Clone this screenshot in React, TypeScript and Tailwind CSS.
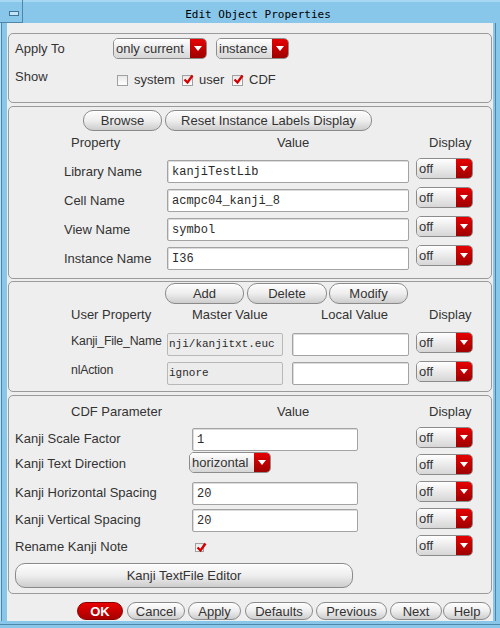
import React from 'react';

const Btn = ({ label, className = '' }: { label: string; className?: string }) => (
  <div
    className={`flex items-center justify-center rounded-[10px] border border-[#8a8a8a] bg-linear-to-b from-[#fdfdfd] via-[#eeeeee] to-[#cdcdcd] text-[13px] leading-none text-[#333] shadow-[inset_0_1px_0_#fff] ${className}`}
  >
    {label}
  </div>
);

const Drop = ({ label, className = '' }: { label: string; className?: string }) => (
  <div className={`flex h-[21px] overflow-hidden rounded-[5px] border border-[#8c8c8c] ${className}`}>
    <div className="flex flex-1 items-center bg-linear-to-b from-white to-[#d6d6d6] pl-[2px] text-[13px] leading-none text-[#333]">
      {label}
    </div>
    <div className="flex w-[16px] items-center justify-center bg-linear-to-b from-[#e60000] to-[#9e0000]">
      <svg width="8" height="5" viewBox="0 0 8 5">
        <polygon points="0,0 8,0 4,5" fill="#fff" />
      </svg>
    </div>
  </div>
);

const Field = ({ value = '', className = '', ro = false }: { value?: string; className?: string; ro?: boolean }) => (
  <div
    className={`flex items-center overflow-hidden whitespace-nowrap rounded-[2px] border font-['Liberation_Mono',monospace] leading-none text-[#2a2a2a] ${
      ro ? 'border-[#b8b8b8] bg-[#ececec]' : 'border-[#a3a3a3] bg-white pl-[4px] text-[12px] shadow-[inset_1px_1px_0_#dcdcdc]'
    } ${className}`}
  >
    {value}
  </div>
);

const Check = ({ on, size = 'w-[11px] h-[11px]' }: { on: boolean; size?: string }) => (
  <div className={`relative shrink-0 border border-[#a0a0a0] bg-linear-to-b from-[#e8e8e8] to-white ${size}`}>
    {on && (
      <svg className="absolute left-[0px] top-[-2px]" width="11" height="11" viewBox="0 0 11 11">
        <path d="M1.5 5.5 L4.5 8.5 L9.5 1.5" stroke="#d40000" strokeWidth="2.4" fill="none" />
      </svg>
    )}
  </div>
);

export default function App() {
  const props = [
    ['Library Name', 'kanjiTestLib'],
    ['Cell Name', 'acmpc04_kanji_8'],
    ['View Name', 'symbol'],
    ['Instance Name', 'I36'],
  ];

  return (
    <div className="flex h-[628px] w-[500px] flex-col bg-[#88c6ea] font-['Liberation_Sans',Arial,sans-serif] text-[13px] text-[#333]">
      {/* title bar */}
      <div className="flex h-[23px] shrink-0 shadow-[inset_0_2px_0_#a6d8f4]">
        <div className="w-[23px] border-r border-b border-[#4f87a8] pl-[9px] pt-[11px]">
          <div className="h-[5px] w-[10px] border border-[#3f7596] bg-[#c4e4f6]" />
        </div>
        <div className="flex flex-1 items-center justify-center pt-[6px] font-['DejaVu_Sans_Mono',monospace] text-[11px] leading-none text-black">
          Edit Object Properties
        </div>
        <div className="w-[7px]" />
      </div>

      <div className="flex flex-1">
        <div className="w-[7px] shadow-[inset_1px_0_0_#b7e1f8,inset_2px_0_0_#4f87a8]" />

        {/* content */}
        <div className="flex w-[486px] flex-col bg-[#eeeeee] pt-[10px]">
          {/* Apply to / Show */}
          <div className="mx-[1px] h-[70px] rounded-[5px] border border-[#9a9a9a]">
            <div className="mt-[4px] flex h-[21px] items-center">
              <span className="ml-[6px] w-[98px]">Apply To</span>
              <Drop className="w-[94px]" label="only current" />
              <Drop className="ml-[9px] w-[73px]" label="instance" />
            </div>
            <div className="mt-[8px] flex h-[20px] items-center">
              <span className="ml-[6px] w-[102px]">Show</span>
              <div className="mt-[6px] flex w-[65px] items-center">
                <Check on={false} />
                <span className="ml-[6px]">system</span>
              </div>
              <div className="mt-[6px] flex w-[50px] items-center">
                <Check on />
                <span className="ml-[6px]">user</span>
              </div>
              <div className="mt-[6px] flex items-center">
                <Check on />
                <span className="ml-[6px]">CDF</span>
              </div>
            </div>
          </div>

          {/* instance properties */}
          <div className="mx-[1px] mt-[3px] h-[173px] rounded-[5px] border border-[#9a9a9a]">
            <div className="mt-[3px] flex h-[21px]">
              <Btn className="ml-[74px] w-[79px]" label="Browse" />
              <Btn className="ml-[3px] w-[207px]" label="Reset Instance Labels Display" />
            </div>
            <div className="mt-[2px] flex h-[20px] items-center">
              <span className="ml-[62px] w-[206px]">Property</span>
              <span className="w-[152px]">Value</span>
              <span>Display</span>
            </div>
            <div className="mt-[3px]">
              {props.map(([l, v]) => (
                <div key={l} className="flex h-[29px]">
                  <div className="ml-[55px] mt-[4px] flex h-[23px] w-[103px] items-center">{l}</div>
                  <Field className="mt-[4px] h-[23px] w-[242px]" value={v} />
                  <Drop className="ml-[7px] mt-[2px] w-[57px]" label="off" />
                </div>
              ))}
            </div>
          </div>

          {/* user properties */}
          <div className="mx-[1px] mt-[2px] h-[111px] rounded-[5px] border border-[#9a9a9a]">
            <div className="mt-[1px] flex h-[21px]">
              <Btn className="ml-[156px] w-[79px]" label="Add" />
              <Btn className="ml-[3px] w-[80px]" label="Delete" />
              <Btn className="ml-[2px] w-[79px]" label="Modify" />
            </div>
            <div className="flex h-[22px] items-center">
              <span className="ml-[62px] w-[121px]">User Property</span>
              <span className="w-[129px]">Master Value</span>
              <span className="w-[108px]">Local Value</span>
              <span>Display</span>
            </div>
            <div className="mt-[4px]">
              {[
                ['Kanji_File_Name', 'nji/kanjitxt.euc'],
                ['nlAction', 'ignore'],
              ].map(([l, v]) => (
                <div key={l} className="flex h-[29px]">
                  <div className="ml-[62px] mt-[3px] flex h-[17px] w-[96px] items-center whitespace-nowrap text-[12.3px] tracking-[-0.2px]">
                    {l}
                  </div>
                  <Field ro className="mt-[3px] h-[23px] w-[116px] pl-[1px] text-[11px]" value={v} />
                  <Field className="ml-[9px] mt-[3px] h-[23px] w-[117px]" />
                  <Drop className="ml-[7px] mt-[2px] w-[57px]" label="off" />
                </div>
              ))}
            </div>
          </div>

          {/* CDF parameters */}
          <div className="mx-[1px] mt-[3px] h-[199px] rounded-[5px] border border-[#9a9a9a]">
            <div className="mt-[5px] flex h-[22px] items-center">
              <span className="ml-[62px] w-[206px]">CDF Parameter</span>
              <span className="w-[152px]">Value</span>
              <span>Display</span>
            </div>
            <div className="mt-[2px]">
              <div className="flex h-[27px]">
                <div className="ml-[6px] flex w-[177px] items-center">Kanji Scale Factor</div>
                <div className="w-[224px]">
                  <Field className="mt-[3px] h-[23px] w-[166px]" value="1" />
                </div>
                <Drop className="mt-[2px] w-[57px]" label="off" />
              </div>
              <div className="flex h-[27px]">
                <div className="ml-[6px] flex w-[177px] items-center pb-[4px]">Kanji Text Direction</div>
                <div className="w-[224px]">
                  <Drop className="-ml-[3px] w-[82px]" label="horizontal" />
                </div>
                <Drop className="mt-[2px] w-[57px]" label="off" />
              </div>
              <div className="flex h-[27px]">
                <div className="ml-[6px] flex w-[177px] items-center whitespace-nowrap">Kanji Horizontal Spacing</div>
                <div className="w-[224px]">
                  <Field className="mt-[3px] h-[23px] w-[166px]" value="20" />
                </div>
                <Drop className="mt-[2px] w-[57px]" label="off" />
              </div>
              <div className="flex h-[27px]">
                <div className="ml-[6px] flex w-[177px] items-center">Kanji Vertical Spacing</div>
                <div className="w-[224px]">
                  <Field className="mt-[3px] h-[23px] w-[166px]" value="20" />
                </div>
                <Drop className="mt-[2px] w-[57px]" label="off" />
              </div>
              <div className="flex h-[27px]">
                <div className="ml-[6px] flex w-[177px] items-center">Rename Kanji Note</div>
                <div className="flex w-[224px] items-center pt-[2px]">
                  <div className="ml-[3px]">
                    <Check on size="w-[9px] h-[9px]" />
                  </div>
                </div>
                <Drop className="mt-[2px] w-[57px]" label="off" />
              </div>
            </div>
            <Btn className="ml-[6px] mt-[3px] h-[25px] w-[338px]" label="Kanji TextFile Editor" />
          </div>

          {/* bottom buttons */}
          <div className="mt-[8px] flex h-[18px]">
            <div className="ml-[70px] flex w-[46px] items-center justify-center rounded-[9px] border border-[#8a0000] bg-linear-to-b from-[#e80000] to-[#a80000] text-[13px] font-bold leading-none text-white">
              OK
            </div>
            <Btn className="ml-[4px] w-[58px]" label="Cancel" />
            <Btn className="ml-[3px] w-[53px]" label="Apply" />
            <Btn className="ml-[4px] w-[68px]" label="Defaults" />
            <Btn className="ml-[3px] w-[71px]" label="Previous" />
            <Btn className="ml-[3px] w-[52px]" label="Next" />
            <Btn className="ml-[1px] w-[48px]" label="Help" />
          </div>
        </div>

        <div className="flex w-[7px]">
          <div className="w-[2px]" />
          <div className="w-[1px] bg-[#4f87a8]" />
        </div>
      </div>

      <div className="h-[7px] shrink-0">
        <div className="mt-[3px] h-[1px] bg-[#4f87a8]" />
      </div>
    </div>
  );
}
